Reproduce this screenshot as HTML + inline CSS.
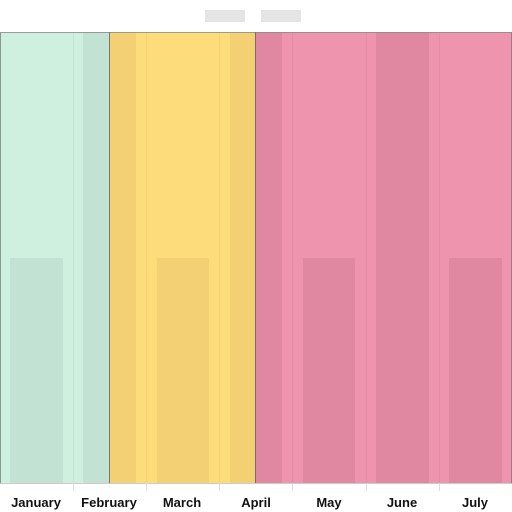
<!DOCTYPE html>
<html><head><style>
html,body{margin:0;padding:0;width:512px;height:512px;background:#fff;overflow:hidden;position:relative;font-family:"Liberation Sans",sans-serif}
div{position:absolute}
.l{top:495px;font-size:13px;font-weight:bold;color:#111;width:100px;text-align:center}
</style></head><body>
<div style="left:205px;top:10px;width:40px;height:12px;background:#e4e4e4"></div>
<div style="left:261px;top:10px;width:40px;height:12px;background:#e4e4e4"></div>

<div style="left:0;top:32px;width:110px;height:451px;background:#cfefdf"></div>
<div style="left:110px;top:32px;width:146px;height:451px;background:#fddc7c"></div>
<div style="left:256px;top:32px;width:256px;height:451px;background:#ee94ae"></div>

<div style="left:73px;top:32px;width:1px;height:451px;background:#c4e4d4"></div>
<div style="left:146px;top:32px;width:1px;height:451px;background:#f4d274"></div>
<div style="left:219px;top:32px;width:1px;height:451px;background:#f4d274"></div>
<div style="left:292px;top:32px;width:1px;height:451px;background:#e48ca6"></div>
<div style="left:366px;top:32px;width:1px;height:451px;background:#e48ca6"></div>
<div style="left:439px;top:32px;width:1px;height:451px;background:#e48ca6"></div>

<div style="left:83px;top:32px;width:27px;height:451px;background:#c2e2d3"></div>
<div style="left:110px;top:32px;width:26px;height:451px;background:#f2d073"></div>
<div style="left:230px;top:32px;width:26px;height:451px;background:#f2d073"></div>
<div style="left:256px;top:32px;width:26px;height:451px;background:#e088a2"></div>
<div style="left:376px;top:32px;width:53px;height:451px;background:#e088a2"></div>

<div style="left:10px;top:258px;width:53px;height:225px;background:#c2e2d3"></div>
<div style="left:157px;top:258px;width:52px;height:225px;background:#f2d073"></div>
<div style="left:303px;top:258px;width:52px;height:225px;background:#e088a2"></div>
<div style="left:449px;top:258px;width:53px;height:225px;background:#e088a2"></div>

<div style="left:0;top:32px;width:512px;height:1px;background:#8a8a8a;opacity:.8"></div>
<div style="left:0;top:32px;width:1px;height:451px;background:#8a9a90"></div>
<div style="left:109px;top:32px;width:1px;height:451px;background:#7a7a6a"></div>
<div style="left:255px;top:32px;width:1px;height:451px;background:#7a6a6a"></div>
<div style="left:511px;top:32px;width:1px;height:451px;background:#a07a88"></div>

<div style="left:0;top:483px;width:512px;height:1px;background:#ccc"></div>
<div style="left:73px;top:483px;width:1px;height:8px;background:#ddd"></div>
<div style="left:146px;top:483px;width:1px;height:8px;background:#ddd"></div>
<div style="left:219px;top:483px;width:1px;height:8px;background:#ddd"></div>
<div style="left:292px;top:483px;width:1px;height:8px;background:#ddd"></div>
<div style="left:366px;top:483px;width:1px;height:8px;background:#ddd"></div>
<div style="left:439px;top:483px;width:1px;height:8px;background:#ddd"></div>

<div class="l" style="left:-14px">January</div>
<div class="l" style="left:59px">February</div>
<div class="l" style="left:132px">March</div>
<div class="l" style="left:206px">April</div>
<div class="l" style="left:279px">May</div>
<div class="l" style="left:352px">June</div>
<div class="l" style="left:425px">July</div>
</body></html>
